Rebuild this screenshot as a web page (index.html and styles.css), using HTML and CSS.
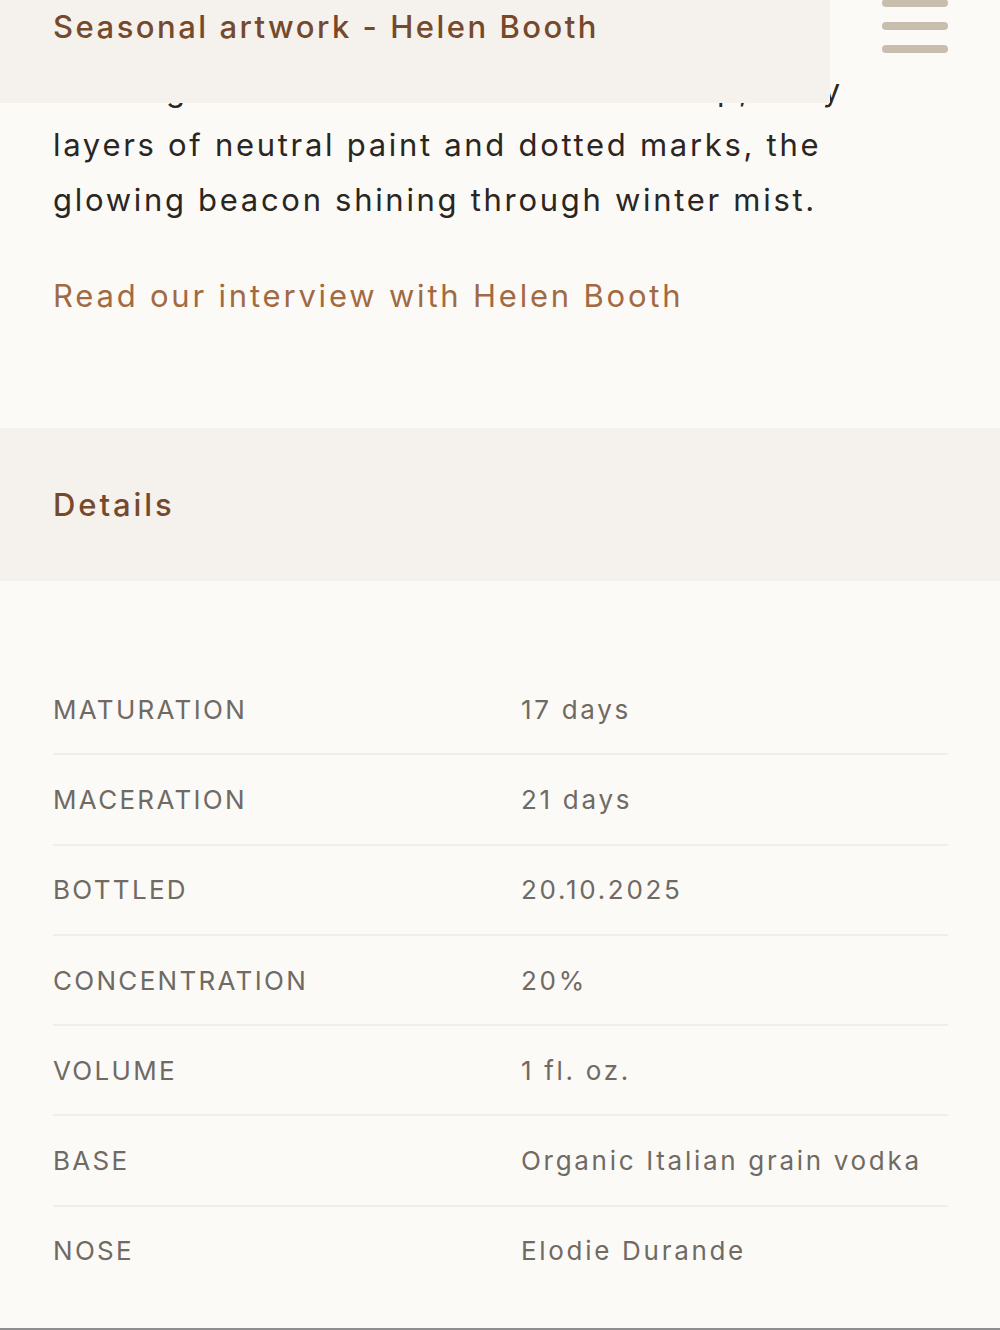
FILE: index.html
```html
<!DOCTYPE html>
<html lang="en">
<head>
<meta charset="utf-8">
<title>Seasonal artwork - Helen Booth</title>
<link rel="stylesheet" href="styles.css">
</head>
<body>
<header class="topbar">
  <div class="topbar-title">Seasonal artwork - Helen Booth</div>
</header>
<button class="menu-toggle" aria-label="Menu">
  <span class="menu-bar"></span>
  <span class="menu-bar"></span>
  <span class="menu-bar"></span>
</button>

<main class="page">
  <section class="artwork">
    <p class="artwork-text">Evoking the coastline at dusk with deep, hazy layers of neutral paint and dotted marks, the glowing beacon shining through winter mist.</p>
    <a class="artwork-link" href="#">Read our interview with Helen Booth</a>
  </section>

  <section class="details-band">
    <h2 class="details-title">Details</h2>
  </section>

  <dl class="specs">
    <div class="spec-row"><dt>Maturation</dt><dd>17 days</dd></div>
    <div class="spec-row"><dt>Maceration</dt><dd>21 days</dd></div>
    <div class="spec-row"><dt>Bottled</dt><dd>20.10.2025</dd></div>
    <div class="spec-row"><dt>Concentration</dt><dd>20%</dd></div>
    <div class="spec-row"><dt>Volume</dt><dd>1 fl. oz.</dd></div>
    <div class="spec-row"><dt>Base</dt><dd>Organic Italian grain vodka</dd></div>
    <div class="spec-row"><dt>Nose</dt><dd>Elodie Durande</dd></div>
  </dl>
</main>
</body>
</html>
```

FILE: styles.css
```css
html, body {
  margin: 0;
  padding: 0;
}

body {
  background: #fcfaf7;
  font-family: Inter, "Open Sans", "Liberation Sans", sans-serif;
  color: #2a2622;
  height: 1330px;
  box-sizing: border-box;
  border-bottom: 2px solid #8e8e8e;
  overflow: hidden;
}

.topbar {
  position: absolute;
  top: 0;
  left: 0;
  width: 830px;
  height: 103px;
  background: #f5f2ed;
  z-index: 2;
}

.topbar-title {
  padding-left: 53px;
  font-size: 31px;
  line-height: 54px;
  letter-spacing: 2.5px;
  font-weight: 500;
  color: #76492c;
}

.menu-toggle {
  position: absolute;
  top: -1px;
  left: 882px;
  width: 66px;
  padding: 0;
  border: 0;
  background: transparent;
  display: flex;
  flex-direction: column;
  gap: 15px;
  z-index: 3;
}

.menu-bar {
  display: block;
  height: 8px;
  border-radius: 4px;
  background: #c9bdad;
}

.page {
  padding-top: 62px;
}

.artwork {
  padding: 0 53px;
  margin-bottom: 105px;
}

.artwork-text {
  margin: 0;
  max-width: 830px;
  font-size: 31px;
  line-height: 55px;
  letter-spacing: 2.7px;
}

.artwork-link {
  display: block;
  margin-top: 41px;
  font-size: 31px;
  line-height: 55px;
  letter-spacing: 2.8px;
  color: #a26a42;
  text-decoration: none;
}

.details-band {
  background: #f5f2ed;
  height: 153px;
  display: flex;
  align-items: center;
  padding: 0 53px;
}

.details-title {
  margin: 0;
  font-size: 31px;
  font-weight: 500;
  letter-spacing: 2.9px;
  color: #76492c;
}

.specs {
  margin: 84px 52px 0 53px;
}

.spec-row {
  display: grid;
  grid-template-columns: 468px 1fr;
  align-items: center;
  height: 88.3px;
  border-bottom: 2px solid #f1ede7;
}

.spec-row:last-child {
  border-bottom: 0;
}

.spec-row dt,
.spec-row dd {
  margin: 0;
  font-size: 26px;
  color: #6f6a64;
}

.spec-row dt {
  text-transform: uppercase;
  letter-spacing: 2.3px;
}

.spec-row dd {
  letter-spacing: 2.7px;
}
```
